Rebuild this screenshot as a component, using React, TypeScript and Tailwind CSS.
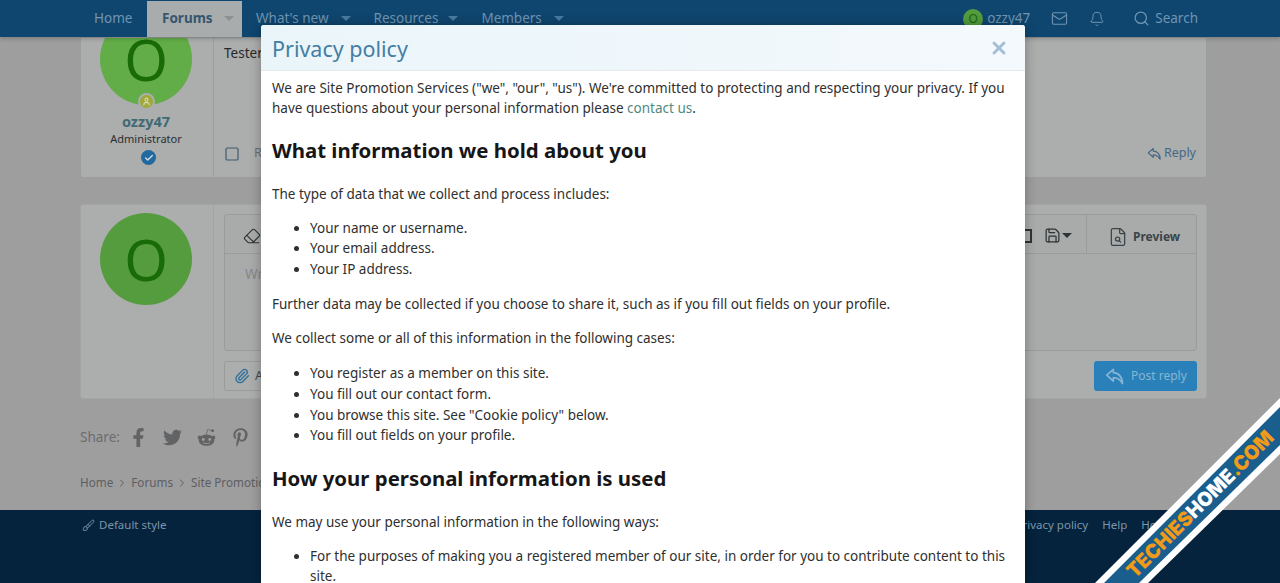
import { Bell, Brush, Check, ChevronRight, FileSearch, Mail, Paperclip, Save, Search, Square, User, X, Eraser } from 'lucide-react';
import { FaFacebookF, FaPinterestP, FaRedditAlien, FaTwitter } from 'react-icons/fa';

const Caret = ({ className = '' }: { className?: string }) => (
  <span className={`inline-block w-0 h-0 border-x-[5px] border-x-transparent border-t-[5px] ${className}`} />
);

// outlined reply arrow, the lucide one is only a line
const ReplyArrow = ({ size, className = '' }: { size: number; className?: string }) => (
  <svg width={size} height={size} viewBox="0 0 24 24" fill="none" stroke="currentColor" strokeWidth="2" strokeLinejoin="round" className={className}>
    <path d="M10 4 L2 11 L10 18 V14 C15 14 18 16 21 21 C21 13 16 8 10 8 Z" />
  </svg>
);

function Avatar({ bright = false }: { bright?: boolean }) {
  return (
    <div className={`w-[92px] h-[92px] rounded-full flex items-center justify-center shrink-0 ${bright ? 'bg-[#62ad47]' : 'bg-[#549c3e]'}`}>
      <span className="text-[56px] leading-none text-[#196b08]">O</span>
    </div>
  );
}

function Header() {
  return (
    <header className="relative z-10 h-[37px] shrink-0 bg-[#0f466f] flex items-center pl-[80px] pr-[82px] text-[13.5px] text-[#6f95b3] shadow-[0_2px_4px_rgba(0,0,0,0.2)]">
      <span className="ml-[14px] w-[53px]">Home</span>
      <div className="h-[36px] mt-px pb-[2px] w-[95px] bg-[#a9acac] flex items-center pl-[15px] font-bold text-[#35566f]">
        Forums
        <Caret className="ml-[11px] border-t-[#8b9094]" />
      </div>
      <span className="ml-[14px]">What's new</span>
      <Caret className="ml-[12px] border-t-[#4a7a9f]" />
      <span className="ml-[23px]">Resources</span>
      <Caret className="ml-[10px] border-t-[#4a7a9f]" />
      <span className="ml-[23px]">Members</span>
      <Caret className="ml-[12px] border-t-[#4a7a9f]" />
      <div className="ml-auto flex items-center">
        <div className="w-5 h-5 rounded-full bg-[#549c3e] text-[#196b08] text-[12px] flex items-center justify-center">O</div>
        <span className="ml-[4px]">ozzy47</span>
        <Mail size={17} strokeWidth={1.5} className="ml-[21px]" />
        <Bell size={16} strokeWidth={1.5} className="ml-[21px]" />
        <Search size={17} strokeWidth={1.75} className="ml-[28px]" />
        <span className="ml-[5px]">Search</span>
      </div>
    </header>
  );
}

function FirstPost() {
  return (
    <div className="h-[141px] flex bg-[#acadad] border border-[#9c9d9d] rounded-b-[3px] overflow-hidden">
      <div className="w-[133px] shrink-0 border-r border-[#9c9d9d] flex flex-col items-center pr-[2px]">
        <div className="relative -mt-[25px]">
          <Avatar bright />
          <div className="absolute left-[38px] top-[80px] w-[17px] h-[17px] rounded-full bg-[#a0a83a] border-2 border-[#acadad] flex items-center justify-center">
            <User size={9} strokeWidth={3} className="text-[#d6dbb0]" />
          </div>
        </div>
        <div className="mt-[8px] text-[14.5px] leading-[17px] font-bold text-[#3f6a76]">ozzy47</div>
        <div className="mt-px text-[11px] leading-[16px] text-[#2b2f33]">Administrator</div>
        <div className="mt-[3px] ml-[5px] w-[15px] h-[15px] rounded-full bg-[#22699f] flex items-center justify-center">
          <Check size={10} strokeWidth={3.5} className="text-[#c9d9e6]" />
        </div>
      </div>
      <div className="flex-1 flex flex-col pl-[10px] pr-[10px]">
        <p className="mt-[5px] text-[13.5px] leading-[20px] text-[#25292c]">Tester post</p>
        <div className="mt-auto mb-[14px] flex items-center">
          <Square size={16} strokeWidth={1.75} className="text-[#3b5c70]" />
          <span className="ml-[14px] text-[12.5px] text-[#6b6f72]">Report</span>
          <div className="ml-auto flex items-center text-[12.5px] text-[#456785]">
            <ReplyArrow size={15} className="mr-[2px]" />
            Reply
          </div>
        </div>
      </div>
    </div>
  );
}

function ReplyBox() {
  return (
    <div className="mt-[26px] h-[195px] flex bg-[#acadad] border border-[#a3a4a4] rounded-[3px]">
      <div className="w-[133px] shrink-0 border-r border-[#a3a4a4] flex justify-center pt-[8px] pr-[2px]">
        <Avatar />
      </div>
      <div className="flex-1 flex flex-col pt-[9px] pl-[10px] pr-[9px]">
        <div className="h-[137px] flex flex-col border border-[#9a9b9b] rounded-[3px] bg-[#a9abab]">
          <div className="h-[39px] flex items-center border-b border-[#9a9b9b]">
            <Eraser size={18} strokeWidth={1.5} className="ml-[18px] mt-[4px] text-[#2e3336]" />
            <div className="ml-auto flex items-center h-full">
              <span className="w-[8px] h-[14px] mr-[12px] mt-[3px] border-y-2 border-r-2 border-[#2e3336]" />
              <Save size={17} strokeWidth={1.75} className="mt-[3px] text-[#2e3336]" />
              <Caret className="ml-px mr-[14px] mt-[3px] border-x-[4px] border-t-[4px] border-t-[#2e3336]" />
              <div className="w-[110px] h-full border-l border-[#9a9b9b] flex items-center pt-[6px] pl-[21px] text-[12px] font-bold text-[#3a4448]">
                <FileSearch size={20} strokeWidth={1.5} className="mr-[5px]" />
                Preview
              </div>
            </div>
          </div>
          <div className="pl-[20px] pt-[10px] text-[13.5px] text-[#83878a]">Write your reply...</div>
        </div>
        <div className="mt-[10px] flex items-center justify-between">
          <div className="h-[30px] flex items-center px-[9px] border border-[#9a9b9b] rounded-[3px] text-[12.5px] text-[#3e4a52]">
            <Paperclip size={16} strokeWidth={2} className="mr-[5px] text-[#2f6f99]" />
            Attach files
          </div>
          <div className="h-[30px] w-[103px] bg-[#2a80b8] rounded-[3px] flex items-center pl-[11px] text-[12px] text-[#86b5d3]">
            <ReplyArrow size={20} className="mr-[6px]" />
            Post reply
          </div>
        </div>
      </div>
    </div>
  );
}

function Footer() {
  return (
    <footer className="h-[73px] shrink-0 bg-[#05233c] pl-[82px] pr-[106px] pt-[6px] flex text-[11.5px] leading-[18px] text-[#7b95aa]">
      <div className="flex items-center h-[18px]">
        <Brush size={13} strokeWidth={1.75} className="mr-[4px]" />
        Default style
      </div>
      <div className="ml-auto flex h-[18px] gap-[14px]">
        <span>Privacy policy</span>
        <span>Help</span>
        <span>Home</span>
      </div>
    </footer>
  );
}

function PolicyModal() {
  const li = 'leading-[20.6px]';
  const h3 = 'text-[20.4px] leading-[28px] font-bold text-[#161616]';
  return (
    <div className="absolute z-20 left-[261px] top-[25px] bottom-0 w-[764px] bg-white rounded-t-[3px] overflow-hidden shadow-[0_0_12px_rgba(0,0,0,0.3)] text-[13.5px] text-[#2f2f2f]">
      <div className="h-[46px] flex items-center justify-between pl-[11px] pr-[16px] bg-gradient-to-r from-[#eaf5fa] to-[#f4f9fd] border-b border-[#e4e9ee]">
        <h2 className="mt-[4px] text-[21.5px] text-[#437ea3]">Privacy policy</h2>
        <X size={20} strokeWidth={3.5} className="text-[#a2bfd6]" />
      </div>
      <div className="pl-[11px] pr-[10px] pt-[7px]">
        <p className="leading-[20.3px]">
          We are Site Promotion Services ("we", "our", "us"). We're committed to protecting and respecting your privacy. If you have questions about your personal information please <span className="text-[#4f8a80]">contact us</span>.
        </p>
        <h3 className={`mt-[17px] ${h3}`}>What information we hold about you</h3>
        <p className="mt-[20px] leading-[20px]">The type of data that we collect and process includes:</p>
        <ul className="mt-[14px] pl-[38px] list-disc">
          <li className={li}>Your name or username.</li>
          <li className={li}>Your email address.</li>
          <li className={li}>Your IP address.</li>
        </ul>
        <p className="mt-[15px] leading-[20px]">Further data may be collected if you choose to share it, such as if you fill out fields on your profile.</p>
        <p className="mt-[14px] leading-[20px]">We collect some or all of this information in the following cases:</p>
        <ul className="mt-[15px] pl-[38px] list-disc">
          <li className={li}>You register as a member on this site.</li>
          <li className={li}>You fill out our contact form.</li>
          <li className={li}>You browse this site. See "Cookie policy" below.</li>
          <li className={li}>You fill out fields on your profile.</li>
        </ul>
        <h3 className={`mt-[18px] ${h3}`}>How your personal information is used</h3>
        <p className="mt-[20px] leading-[20px]">We may use your personal information in the following ways:</p>
        <ul className="mt-[14px] pl-[38px] list-disc">
          <li className={li}>For the purposes of making you a registered member of our site, in order for you to contribute content to this site.</li>
        </ul>
      </div>
    </div>
  );
}

function Watermark() {
  return (
    <svg className="absolute z-30 right-0 bottom-0" width="185" height="185" viewBox="0 0 185 185">
      <polygon points="0,185 185,0 185,56 53,185" fill="#ffffff" />
      <polygon points="9,185 185,9 185,47 44,185" fill="#1a5e8e" />
      <text
        transform="translate(40 181) rotate(-45)"
        fill="#f09a1a"
        fontFamily="Inter, sans-serif"
        fontWeight="900"
        fontSize="20"
        textLength="198"
        lengthAdjust="spacingAndGlyphs"
      >
        TECHIES<tspan fill="#ffffff">HOME</tspan>.COM
      </text>
    </svg>
  );
}

export default function App() {
  return (
    <div className="relative h-[583px] w-[1280px] overflow-hidden flex flex-col bg-[#9f9e9f] font-['Noto_Sans',sans-serif]">
      <Header />
      <main className="flex-1 pl-[80px] pr-[73px] min-h-0">
        <FirstPost />
        <ReplyBox />
        <div className="mt-[28px] flex items-center text-[13.5px] text-[#6b6c6e]">
          Share:
          <div className="ml-[9px] flex items-center gap-[15px] text-[19px] text-[#626365]">
            <FaFacebookF />
            <FaTwitter />
            <FaRedditAlien />
            <FaPinterestP />
          </div>
        </div>
        <div className="mt-[27px] flex items-center text-[11.7px] text-[#5b5f63]">
          Home
          <ChevronRight size={12} className="mx-[3px]" />
          Forums
          <ChevronRight size={12} className="mx-[3px]" />
          Site Promotion
        </div>
      </main>
      <Footer />
      <PolicyModal />
      <Watermark />
    </div>
  );
}
